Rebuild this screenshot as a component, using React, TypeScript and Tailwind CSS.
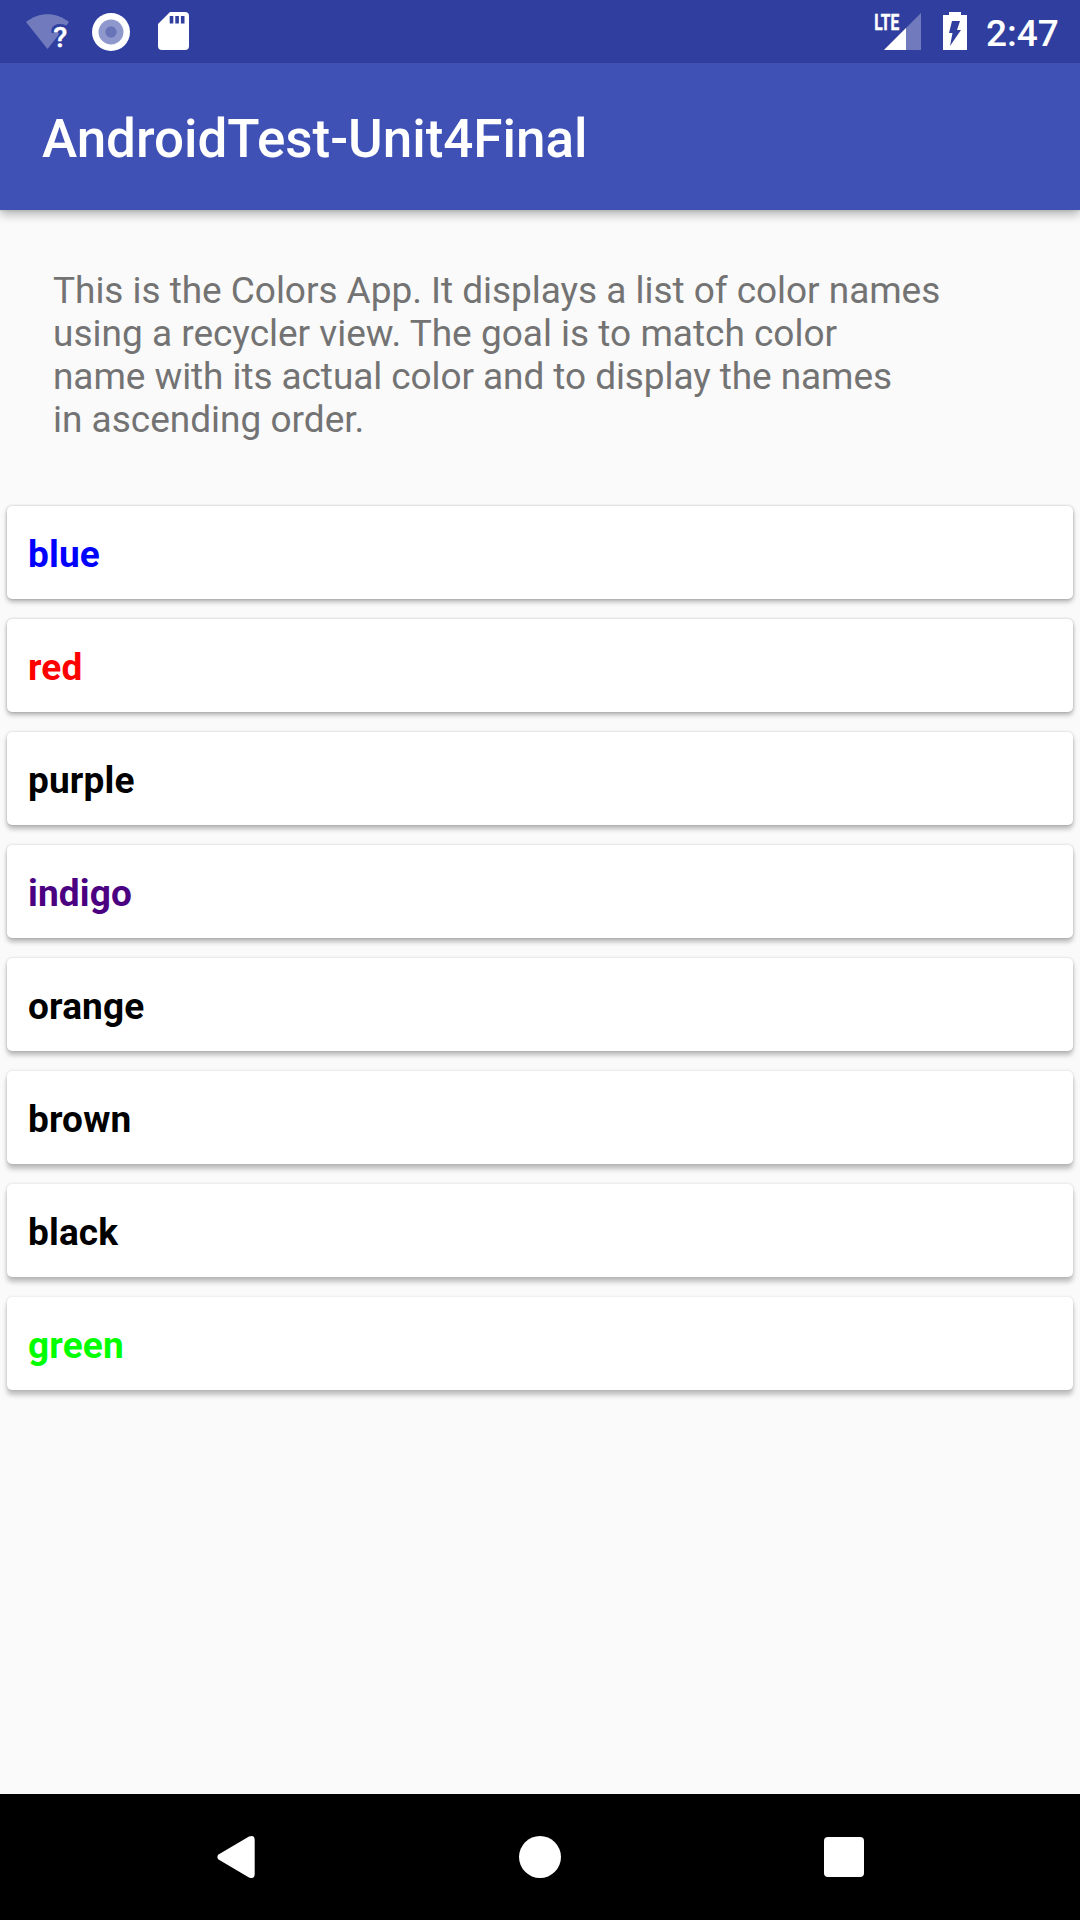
const items = [
  { name: 'blue', color: 'text-[#0000ff]', shadow: 'shadow-[0_3px_5px_rgba(0,0,0,0.27),0_0_3px_rgba(0,0,0,0.2)]' },
  { name: 'red', color: 'text-[#ff0000]', shadow: 'shadow-[0_3px_5px_rgba(0,0,0,0.28),0_0_3px_rgba(0,0,0,0.19)]' },
  { name: 'purple', color: 'text-black', shadow: 'shadow-[0_4px_5px_rgba(0,0,0,0.26),0_0_3px_rgba(0,0,0,0.18)]' },
  { name: 'indigo', color: 'text-[#4b0082]', shadow: 'shadow-[0_4px_5px_rgba(0,0,0,0.26),0_0_3px_rgba(0,0,0,0.17)]' },
  { name: 'orange', color: 'text-black', shadow: 'shadow-[0_4px_5px_rgba(0,0,0,0.26),0_0_3px_rgba(0,0,0,0.16)]' },
  { name: 'brown', color: 'text-black', shadow: 'shadow-[0_5px_5px_rgba(0,0,0,0.24),0_0_3px_rgba(0,0,0,0.15)]' },
  { name: 'black', color: 'text-black', shadow: 'shadow-[0_5px_5px_rgba(0,0,0,0.24),0_0_3px_rgba(0,0,0,0.14)]' },
  { name: 'green', color: 'text-[#00ff00]', shadow: 'shadow-[0_5px_5px_rgba(0,0,0,0.24),0_0_3px_rgba(0,0,0,0.13)]' },
];

function WifiIcon() {
  return (
    <svg width="46" height="42" viewBox="0 0 46 42">
      <path d="M1 10 C14 -0.500 31 -0.500 44 10 L22.500 37 Z" fill="#707ABC" />
      <path d="M26.500 21 v-3.500 q1.500 -5.500 8.500 -5.500 q9 0 9 8 q0 3 -4 6 v12 h-7 v-12 l1 -5 Z" fill="#303f9f" />
      <text x="28.200" y="35" fontFamily="Roboto" fontSize="28" fontWeight="500" fill="#fff" stroke="#fff" strokeWidth="0.400" textLength="14" lengthAdjust="spacingAndGlyphs">?</text>
    </svg>
  );
}

function SyncDot() {
  return (
    <svg width="38" height="38" viewBox="0 0 38 38">
      <circle cx="19" cy="19" r="19" fill="#fff" />
      <circle cx="19" cy="19" r="12.500" fill="#8f98cc" />
      <circle cx="19" cy="19" r="5.700" fill="#6873b8" />
    </svg>
  );
}

function SdCard() {
  return (
    <svg width="31" height="38" viewBox="0 0 31 38">
      <path d="M12 0 H27 Q31 0 31 4 V34 Q31 38 27 38 H4 Q0 38 0 34 V12 Z" fill="#fff" />
      <path d="M11.700 4h3.600v7.500h-3.600zM17.300 4h3.600v7.500h-3.600zM22.900 4h3.600v7.500h-3.600z" fill="#303f9f" />
    </svg>
  );
}

function Signal() {
  return (
    <svg width="51" height="42" viewBox="-4 -4 51 42">
      <path d="M46 0 V37 H9 Z" fill="#707ABC" />
      <path d="M31 15 V37 H9 Z" fill="#fff" />
      <text x="-0.800" y="16.700" fontFamily="Roboto" fontSize="22.500" fontWeight="700" fill="#fff" stroke="#fff" strokeWidth="0.500" textLength="25" lengthAdjust="spacingAndGlyphs">LTE</text>
    </svg>
  );
}

function Battery() {
  return (
    <svg width="24" height="38" viewBox="0 0 24 38">
      <path d="M6 0H18V3H24V38H0V3H6Z" fill="#fff" />
      <path d="M9 9H17L14 18H18L7 34L9.500 21H6Z" fill="#303f9f" />
    </svg>
  );
}

export default function App() {
  return (
    <div className="flex h-[1920px] w-[1080px] flex-col overflow-hidden bg-[#fafafa] font-[Roboto,sans-serif]">
      <div className="z-20 flex h-[63px] shrink-0 items-start bg-[#303f9f] pr-[22px] pl-[25px] text-white">
        <div className="flex items-start pt-[12px]">
          <WifiIcon />
          <div className="ml-[21px] pt-px"><SyncDot /></div>
          <div className="ml-[28px]"><SdCard /></div>
        </div>
        <div className="ml-auto flex w-[187px] items-start">
          <div className="pt-[9px]"><Signal /></div>
          <div className="ml-[21px] pt-[12px]"><Battery /></div>
          <div className="ml-[19px] pt-[12px] text-[37px] leading-[43px] font-medium">2:47</div>
        </div>
      </div>
      <header className="z-10 flex h-[147px] shrink-0 items-center bg-[#3f51b5] pt-[5px] pl-[42px] shadow-[0_4px_10px_rgba(0,0,0,0.3),0_0_3px_rgba(0,0,0,0.15)]">
        <h1 className="text-[53px] leading-[62px] font-medium tracking-[-0.05px] text-white">AndroidTest-Unit4Final</h1>
      </header>
      <main className="flex min-h-0 flex-1 flex-col">
        <p className="mt-[59px] pl-[53px] text-[37px] leading-[43px] text-[#737373]">
          <span className="tracking-[-0.04px]">This is the Colors App. It displays a list of color names</span><br />
          using a recycler view. The goal is to match color<br />
          <span className="tracking-[-0.08px]">name with its actual color and to display the names</span><br />
          in ascending order.
        </p>
        <ul className="mt-[65px] flex flex-col gap-5 px-[7px]">
          {items.map((item) => (
            <li key={item.name} className={`flex h-[93px] items-center rounded-[5px] bg-white pt-[3px] pl-[21px] text-[37px] leading-[43px] font-bold tracking-[0.15px] ${item.color} ${item.shadow}`}>
              {item.name}
            </li>
          ))}
        </ul>
      </main>
      <nav className="flex h-[126px] shrink-0 items-center bg-black pl-[217px]">
        <svg width="38" height="42" viewBox="0 0 38 42">
          <path d="M32 0.600 Q37.700 -1.500 37.700 4 V38 Q37.700 43.500 32 41.400 L1.500 23.500 Q-0.800 21 1.500 18.500 Z" fill="#fff" />
        </svg>
        <div className="ml-[264px] size-[42px] rounded-full bg-white" />
        <div className="ml-[263px] size-[40px] rounded-[4px] bg-white" />
      </nav>
    </div>
  );
}
